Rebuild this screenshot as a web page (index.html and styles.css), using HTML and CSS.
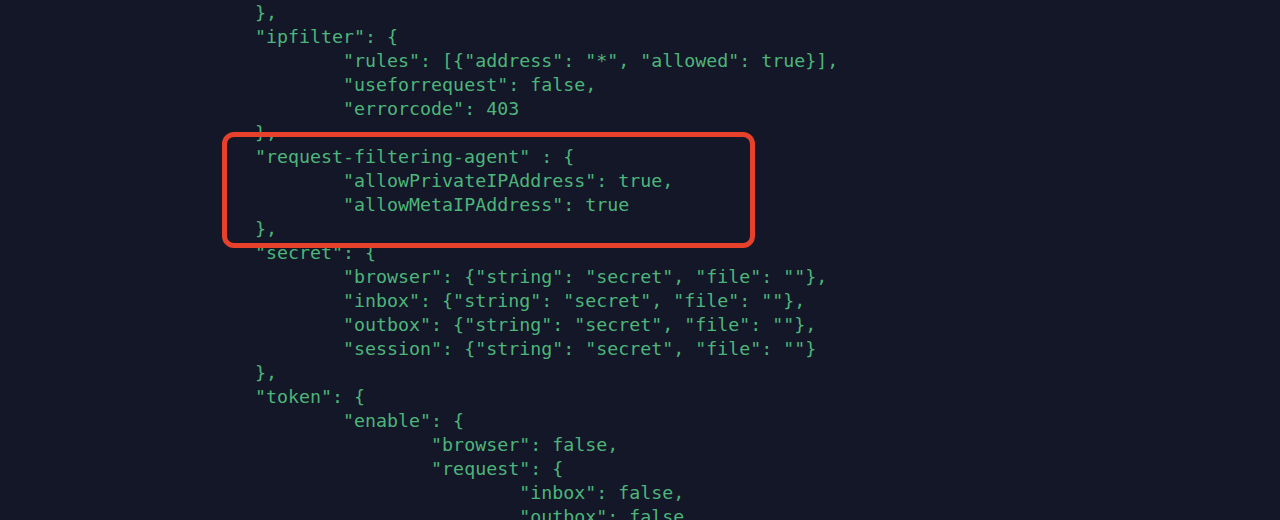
FILE: index.html
```html
<!DOCTYPE html>
<html>
<head>
<meta charset="utf-8">
<link rel="stylesheet" href="styles.css">
</head>
<body>
<div class="screen">
<pre class="code">},
"ipfilter": {
	"rules": [{"address": "*", "allowed": true}],
	"useforrequest": false,
	"errorcode": 403
},
"request-filtering-agent" : {
	"allowPrivateIPAddress": true,
	"allowMetaIPAddress": true
},
"secret": {
	"browser": {"string": "secret", "file": ""},
	"inbox": {"string": "secret", "file": ""},
	"outbox": {"string": "secret", "file": ""},
	"session": {"string": "secret", "file": ""}
},
"token": {
	"enable": {
		"browser": false,
		"request": {
			"inbox": false,
			"outbox": false
		}
	}
}</pre>
<div class="highlight"></div>
</div>
</body>
</html>
```

FILE: styles.css
```css
html, body {
  margin: 0;
  padding: 0;
  background: #141728;
}
.screen {
  position: relative;
  width: 1280px;
  height: 520px;
  overflow: hidden;
  background: #141728;
}
.code {
  margin: 0;
  padding: 1px 0 0 255px;
  font-family: "DejaVu Sans Mono", monospace;
  font-size: 18.3px;
  line-height: 24px;
  color: #4db57a;
  tab-size: 8;
  -moz-tab-size: 8;
  white-space: pre;
}
.highlight {
  position: absolute;
  left: 222px;
  top: 132px;
  width: 533px;
  height: 116px;
  box-sizing: border-box;
  border: 5px solid #e8412b;
  border-radius: 12px;
}
```
